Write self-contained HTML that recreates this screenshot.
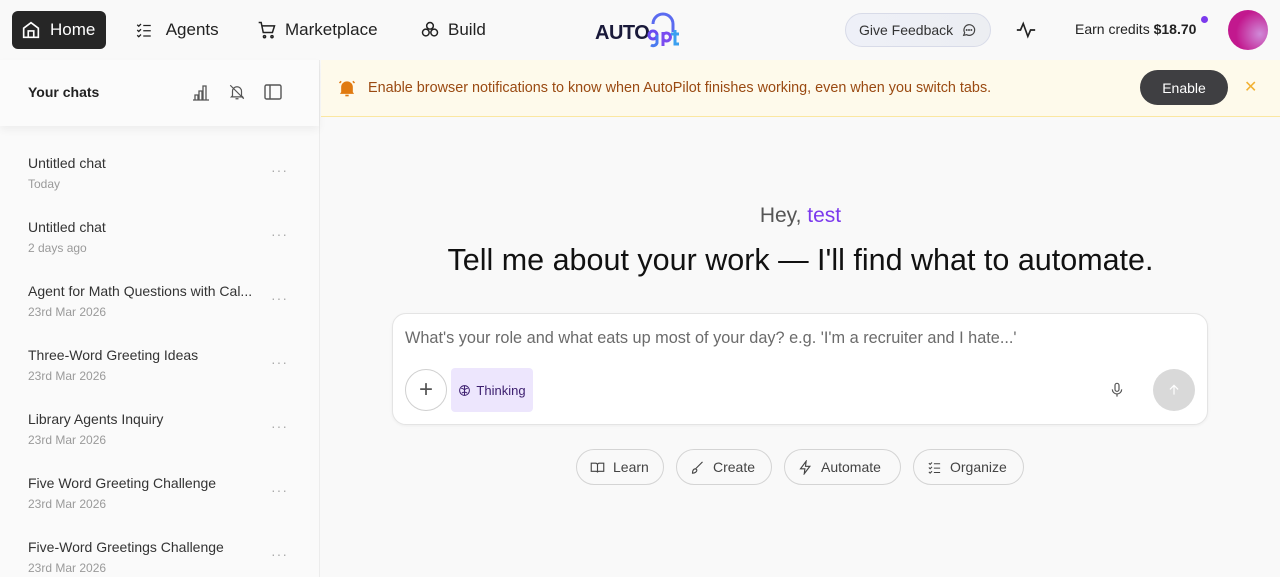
<!DOCTYPE html>
<html><head><meta charset="utf-8"><style>
*{box-sizing:border-box;margin:0;padding:0}
body{width:1280px;height:577px;overflow:hidden;background:#f9f9f9;font-family:"Liberation Sans",sans-serif;color:#1a1a1a;position:relative}
.nav{position:absolute;top:0;left:0;width:1280px;height:60px;background:#f9f9f9}
.ni{position:absolute;top:11px;height:38px;display:flex;align-items:center;font-size:17px;color:#222;gap:8px}
.home{left:12px;width:94px;background:#262626;color:#fff;border-radius:6px;padding-left:8px}
svg{display:block}
.side{position:absolute;top:60px;left:0;width:320px;height:517px;background:#fafafa;border-right:1px solid #ececec}
.sh{height:66px;background:#fbfbfb;box-shadow:0 4px 8px rgba(0,0,0,.05);position:relative}
.item{position:absolute;left:28px;width:264px}
.item .t{font-size:14px;color:#333}
.item .d{font-size:12px;color:#9a9a9a;margin-top:6px}
.item .dots{position:absolute;right:4px;top:7px;color:#aaa;font-size:14px;letter-spacing:1px}
.banner{position:absolute;left:321px;top:60px;width:959px;height:57px;background:#fefaeb;border-bottom:1px solid #fbe7a1}
.btn{position:absolute;border:1px solid #d4d4d4;border-radius:20px;height:36px;display:flex;align-items:center;gap:8px;padding:0 13px;font-size:14px;color:#444;background:#f9f9f9;top:449px}
</style></head><body>
<div class="nav">
 <div class="ni home"><svg width="22" height="22" viewBox="0 0 24 24" fill="none" stroke="#fff" stroke-width="1.8"><path d="M4 10l8-6 8 6v10H4z"/><path d="M9 20v-7h6v7"/></svg>Home</div>
 <div class="ni" style="left:135px"><svg width="18" height="18" viewBox="0 0 24 24" fill="none" stroke="#222" stroke-width="1.7"><path d="M3 5l2 2 3-3M3 12l2 2 3-3M3 19l2 2 3-3M11 6h10M11 13h10M11 20h10"/></svg>&nbsp;Agents</div>
 <div class="ni" style="left:257px"><svg width="20" height="20" viewBox="0 0 24 24" fill="none" stroke="#222" stroke-width="1.8"><path d="M2 3h3l2.5 12h11L21 7H6"/><circle cx="9" cy="20" r="1.3"/><circle cx="18" cy="20" r="1.3"/></svg>Marketplace</div>
 <div class="ni" style="left:420px"><svg width="20" height="20" viewBox="0 0 24 24" fill="none" stroke="#222" stroke-width="1.8"><circle cx="12" cy="7" r="4"/><circle cx="7" cy="15" r="4"/><circle cx="17" cy="15" r="4"/></svg>Build</div>
 <div style="position:absolute;left:595px;top:10px;width:92px;height:42px">
  <div style="position:absolute;left:0;top:12px;font-size:20px;font-weight:bold;color:#1a1a3a;letter-spacing:-0.5px">AUTO</div>
  <svg style="position:absolute;left:46px;top:0" width="46" height="42" viewBox="0 0 46 42" fill="none" stroke-width="3"><path d="M12 14a10 10 0 0 1 20 0v8" stroke="#5b6bf0"/><circle cx="12" cy="25" r="4" stroke="#6a4cf0"/><path d="M16 25v8a4 4 0 0 1-6 2" stroke="#4a7af0"/><path d="M22 22v14M22 25a4 4 0 1 1 0 4" stroke="#7a4cf0"/><path d="M34 20v14h4" stroke="#3aa0f0"/><path d="M30 24h8" stroke="#3aa0f0"/></svg>
 </div>
 <div style="position:absolute;left:845px;top:13px;width:146px;height:34px;border:1px solid #d8dbe8;border-radius:17px;background:linear-gradient(90deg,#eef0f8,#eceef2);display:flex;align-items:center;padding-left:13px;font-size:14px;color:#333;gap:8px">Give Feedback <svg width="16" height="16" viewBox="0 0 24 24" fill="none" stroke="#444" stroke-width="1.8"><path d="M4 20l1.5-4A8 8 0 1 1 8.5 19z"/><circle cx="8.5" cy="12" r=".6" fill="#444"/><circle cx="12" cy="12" r=".6" fill="#444"/><circle cx="15.5" cy="12" r=".6" fill="#444"/></svg></div>
 <svg style="position:absolute;left:1015px;top:19px" width="22" height="22" viewBox="0 0 24 24" fill="none" stroke="#222" stroke-width="1.8"><path d="M2 12h4l3-7 5 14 3-7h5"/></svg>
 <div style="position:absolute;left:1075px;top:21px;font-size:14px;color:#222">Earn credits <b>$18.70</b></div>
 <div style="position:absolute;left:1201px;top:16px;width:7px;height:7px;border-radius:50%;background:#7c3aed"></div>
 <div style="position:absolute;left:1228px;top:10px;width:40px;height:40px;border-radius:50%;background:radial-gradient(circle at 80% 60%,#d08ad8,#c2188e 60%)"></div>
</div>
<div class="side">
 <div class="sh">
  <div style="position:absolute;left:28px;top:24px;font-size:14px;font-weight:bold;color:#222">Your chats</div>
  <svg style="position:absolute;left:192px;top:23px" width="18" height="18" viewBox="0 0 18 18" fill="none" stroke="#555" stroke-width="1.3"><path d="M1 17h16M3 17v-5h3v5M7 17V8h3v9M11 17V3h3v14"/></svg>
  <svg style="position:absolute;left:228px;top:23px" width="18" height="18" viewBox="0 0 24 24" fill="none" stroke="#555" stroke-width="1.6"><path d="M6 17v-6a6 6 0 0 1 12 0v6l1.5 1.5h-15zM10 21h4M3 3l18 18"/></svg>
  <svg style="position:absolute;left:264px;top:23px" width="18" height="18" viewBox="0 0 18 18" fill="none" stroke="#555" stroke-width="1.4"><rect x="1" y="2" width="16" height="14" rx="1.5"/><path d="M6 2v14"/></svg>
 </div>
 <div class="item" style="top:95px"><div class="t">Untitled chat</div><div class="d">Today</div><div class="dots">···</div></div>
 <div class="item" style="top:159px"><div class="t">Untitled chat</div><div class="d">2 days ago</div><div class="dots">···</div></div>
 <div class="item" style="top:223px"><div class="t">Agent for Math Questions with Cal...</div><div class="d">23rd Mar 2026</div><div class="dots">···</div></div>
 <div class="item" style="top:287px"><div class="t">Three-Word Greeting Ideas</div><div class="d">23rd Mar 2026</div><div class="dots">···</div></div>
 <div class="item" style="top:351px"><div class="t">Library Agents Inquiry</div><div class="d">23rd Mar 2026</div><div class="dots">···</div></div>
 <div class="item" style="top:415px"><div class="t">Five Word Greeting Challenge</div><div class="d">23rd Mar 2026</div><div class="dots">···</div></div>
 <div class="item" style="top:479px"><div class="t">Five-Word Greetings Challenge</div><div class="d">23rd Mar 2026</div><div class="dots">···</div></div>
</div>
<div class="banner">
 <svg style="position:absolute;left:16px;top:18px" width="20" height="20" viewBox="0 0 24 24"><path d="M5 17V11a7 7 0 0 1 14 0v6l1.5 2h-17z" fill="#e07a10"/><path d="M10 21h4" stroke="#e07a10" stroke-width="2"/><path d="M3 6l2-2M21 6l-2-2" stroke="#e07a10" stroke-width="1.8"/></svg>
 <div style="position:absolute;left:47px;top:20px;font-size:14.4px;color:#9a4a12">Enable browser notifications to know when AutoPilot finishes working, even when you switch tabs.</div>
 <div style="position:absolute;left:819px;top:10px;width:88px;height:35px;border-radius:18px;background:#3f3f42;color:#fff;font-size:14px;display:flex;align-items:center;justify-content:center">Enable</div>
 <div style="position:absolute;left:923px;top:17px;color:#f2b132;font-size:16px">✕</div>
</div>
<div style="position:absolute;left:321px;top:204px;width:959px;text-align:center;font-size:21px;color:#555">Hey, <span style="color:#7c3aed">test</span></div>
<div style="position:absolute;left:321px;top:243px;width:959px;text-align:center;font-size:30.5px;color:#111">Tell me about your work — I'll find what to automate.</div>
<div style="position:absolute;left:392px;top:313px;width:816px;height:112px;background:#fff;border:1px solid #e4e4e4;border-radius:14px;box-shadow:0 1px 3px rgba(0,0,0,.05)">
 <div style="position:absolute;left:12px;top:15px;font-size:16.3px;color:#6b6b6b">What's your role and what eats up most of your day? e.g. 'I'm a recruiter and I hate...'</div>
 <div style="position:absolute;left:12px;top:55px;width:42px;height:42px;border:1px solid #d0d0d0;border-radius:50%;display:flex;align-items:center;justify-content:center;font-size:24px;color:#555;font-weight:300">+</div>
 <div style="position:absolute;left:58px;top:54px;width:82px;height:44px;background:#ede6fd;border-radius:4px;display:flex;align-items:center;justify-content:center;gap:5px;font-size:13px;color:#3b1d6e"><svg width="13" height="13" viewBox="0 0 24 24" fill="none" stroke="#3b1d6e" stroke-width="1.8"><circle cx="12" cy="12" r="9"/><path d="M12 3v18M6 8c3 0 6 2 6 4M18 8c-3 0-6 2-6 4M7 17c2-2 4-2 5-2M17 17c-2-2-4-2-5-2"/></svg>Thinking</div>
 <svg style="position:absolute;left:716px;top:67px" width="16" height="18" viewBox="0 0 24 24" fill="none" stroke="#555" stroke-width="1.8"><rect x="9" y="2" width="6" height="12" rx="3"/><path d="M5 11a7 7 0 0 0 14 0M12 18v4"/></svg>
 <div style="position:absolute;left:760px;top:55px;width:42px;height:42px;border-radius:50%;background:#d9d9d9;display:flex;align-items:center;justify-content:center"><svg width="14" height="14" viewBox="0 0 24 24" fill="none" stroke="#fff" stroke-width="2"><path d="M12 20V4M5 11l7-7 7 7"/></svg></div>
</div>
<div class="btn" style="left:576px;width:88px"><svg width="15" height="15" viewBox="0 0 24 24" fill="none" stroke="#444" stroke-width="1.8"><path d="M2 5h7a3 3 0 0 1 3 3v12a2 2 0 0 0-2-2H2zM22 5h-7a3 3 0 0 0-3 3v12a2 2 0 0 1 2-2h8z"/></svg>Learn</div>
<div class="btn" style="left:676px;width:96px"><svg width="15" height="15" viewBox="0 0 24 24" fill="none" stroke="#444" stroke-width="1.8"><path d="M20 3L9 14M9 14c-3 0-5 2-5 7 4 0 7-2 7-5z"/></svg>Create</div>
<div class="btn" style="left:784px;width:117px"><svg width="15" height="15" viewBox="0 0 24 24" fill="none" stroke="#444" stroke-width="1.8"><path d="M13 2L4 14h7l-1 8 9-12h-7z"/></svg>Automate</div>
<div class="btn" style="left:913px;width:111px"><svg width="15" height="15" viewBox="0 0 24 24" fill="none" stroke="#444" stroke-width="1.7"><path d="M3 5l2 2 3-3M3 12l2 2 3-3M3 19l2 2 3-3M11 6h10M11 13h10M11 20h10"/></svg>Organize</div>
</body></html>
